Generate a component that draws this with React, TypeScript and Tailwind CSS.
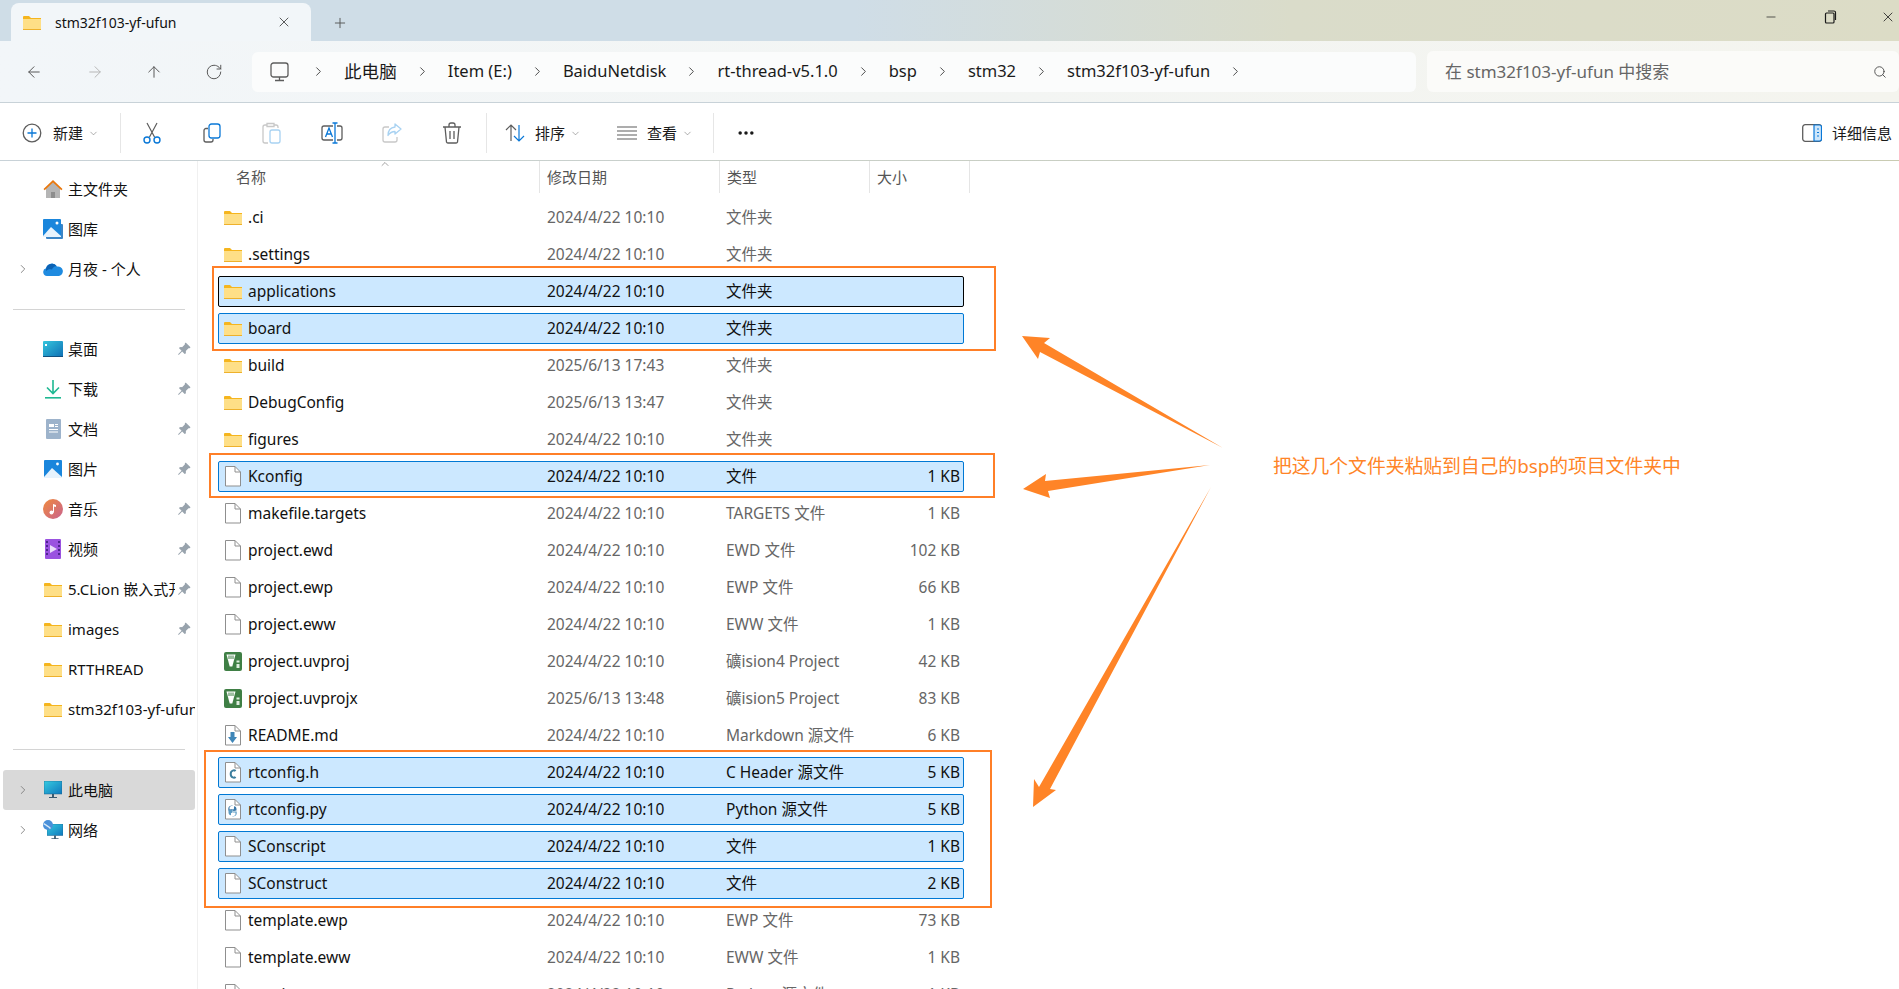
import React from "react";
import {
  ArrowLeft,
  ArrowRight,
  ArrowUp,
  ChevronDown,
  ChevronRight,
  ChevronUp,
  Minus,
  MoreHorizontal,
  Plus,
  RotateCw,
  Search,
  X,
} from "lucide-react";
import { BsPinAngleFill } from "react-icons/bs";

const FolderIcon = ({ w = 18, h = 15 }: { w?: number; h?: number }) => (
  <svg width={w} height={h} viewBox="0 0 18 15" className="shrink-0">
    <path d="M0 2a1 1 0 0 1 1-1h5l2 2h10v2H0z" fill="#f5b51e" />
    <path d="M0 4h18v10a1 1 0 0 1-1 1H1a1 1 0 0 1-1-1z" fill="#fedf87" />
    <path d="M0 14h18v1H0z" fill="#eeb12c" />
  </svg>
);

const FileIcon = ({ children }: { children?: React.ReactNode }) => (
  <svg width="17" height="21" viewBox="0 0 17 21" className="shrink-0">
    <path
      d="M1.5.5h9.5l5.500 5.500v14h-15z"
      fill="#fff"
      stroke="#8f8f8f"
      strokeLinejoin="round"
    />
    <path d="M11 .5v5.500h5.500" fill="none" stroke="#8f8f8f" />
    {children}
  </svg>
);

const CHeaderIcon = () => (
  <FileIcon>
    <path
      d="M11.500 9.200c-1-1.400-4.800-1.200-4.800 2.800s3.800 4.200 4.800 2.800"
      fill="none"
      stroke="#3c7e9e"
      strokeWidth="2"
    />
  </FileIcon>
);

const PythonIcon = () => (
  <FileIcon>
    <path d="M8.500 7c-2 0-3 .6-3 2v1.500h3v1H4.300V9.500C4.300 7.500 6 6.500 8.500 6.500z" fill="#3a78a8" />
    <path d="M5 10.500h3.500c1 0 1.500-.5 1.500-1.500V7.300c1.500.2 2.500 1 2.500 3v1.200H9v.5h3.500" fill="#3a78a8" />
    <path d="M8.500 17c2 0 3-.6 3-2v-1.500h-3v-1h4.200v2c0 2-1.700 3-4.200 3z" fill="#5b9bc4" />
    <path d="M4.500 11h4v1.500c0 .8-.6 1.500-1.500 1.500v2.200c-1.500-.2-2.500-1-2.500-3z" fill="#5b9bc4" />
  </FileIcon>
);

const MarkdownIcon = () => (
  <FileIcon>
    <path d="M6.500 7h4v5h2.500l-4.500 6-4.500-6h2.500z" fill="#3f86b8" />
  </FileIcon>
);

const KeilIcon = () => (
  <svg width="18" height="19" viewBox="0 0 18 19" className="shrink-0">
    <rect x="0" y="0" width="18" height="19" rx="2" fill="#3f7f45" />
    <path d="M2.500 2.500h9l-3.200 12h-2.600z" fill="#fff" />
    <path d="M5 3.500v3.500M7 3.500v3.500M9 3.500v3.500" stroke="#3f7f45" strokeWidth="1" />
    <path d="M12.500 8.500h3v2h-3zM12.500 12h3v4h-3z" fill="#dfeee0" />
  </svg>
);

const HomeIcon = () => (
  <svg width="20" height="20" viewBox="0 0 20 20">
    <path d="M3 9.500 10 3l7 6.500V19H3z" fill="#b5b5b5" />
    <path d="M8 19v-6h4v6z" fill="#8d8d8d" />
    <path d="M.5 10 10 1l9.500 9-1.200 1.300L10 3.500 1.700 11.300z" fill="#e8770d" />
  </svg>
);

const GalleryIcon = () => (
  <svg width="20" height="20" viewBox="0 0 20 20">
    <rect x="3" y="5" width="17" height="15" rx="1" fill="#3b85c6" />
    <rect x="0" y="0" width="18" height="18" rx="1" fill="#1a86dc" />
    <path d="M0 17 8 8l10 9v1H0z" fill="#e7f3fd" />
    <circle cx="14" cy="4" r="1.500" fill="#fff" />
  </svg>
);

const CloudIcon = () => (
  <svg width="20" height="14" viewBox="0 0 20 14">
    <path d="M4 14a4 4 0 0 1-1-7.800A6 6 0 0 1 14 4.500a4.600 4.600 0 0 1 2 9.500z" fill="#1f8be0" />
    <path d="M3 7a6 6 0 0 1 10.500-3c-3 .5-4 2.500-4.500 3.500C7 7 5 7 3 9z" fill="#0c62b4" />
  </svg>
);

const DesktopIcon = () => (
  <svg width="20" height="16" viewBox="0 0 20 16">
    <defs>
      <linearGradient id="dsk" x1="0" y1="0" x2="1" y2="1">
        <stop offset="0" stopColor="#35c6dd" />
        <stop offset="1" stopColor="#0f6fb5" />
      </linearGradient>
    </defs>
    <rect width="20" height="16" rx="1" fill="url(#dsk)" />
    <rect x="2" y="3" width="2" height="2" fill="#fff" />
    <rect y="15" width="20" height="1" fill="#12507f" />
  </svg>
);

const DownloadIcon = () => (
  <svg width="16" height="20" viewBox="0 0 16 20">
    <path d="M8 1v13M2 8.500 8 14.500l6-6" fill="none" stroke="#1fb892" strokeWidth="1.600" />
    <rect y="18" width="16" height="1.600" fill="#1fb892" />
  </svg>
);

const DocIcon = () => (
  <svg width="15" height="20" viewBox="0 0 15 20">
    <rect width="15" height="20" rx="1" fill="#9db3cb" />
    <path d="M3 5h5v3H3zM9 5h3v1H9zM9 7h3v1H9zM3 10h9v1H3zM3 12.500h9v1H3z" fill="#fff" />
  </svg>
);

const PictureIcon = () => (
  <svg width="18" height="18" viewBox="0 0 18 18">
    <rect width="18" height="18" rx="1" fill="#1a86dc" />
    <path d="M0 17 8 8l10 9v1H0z" fill="#e7f3fd" />
    <circle cx="13.500" cy="4" r="1.400" fill="#fff" />
  </svg>
);

const MusicIcon = () => (
  <svg width="20" height="20" viewBox="0 0 20 20">
    <defs>
      <linearGradient id="msc" x1="0" y1="0" x2="1" y2="1">
        <stop offset="0" stopColor="#f08a3c" />
        <stop offset="1" stopColor="#c9638f" />
      </linearGradient>
    </defs>
    <circle cx="10" cy="10" r="10" fill="url(#msc)" />
    <circle cx="8.500" cy="13.500" r="2" fill="#fff" />
    <path d="M10 13.500V5l3 1v2l-2-.5v6z" fill="#fff" />
  </svg>
);

const VideoIcon = () => (
  <svg width="16" height="20" viewBox="0 0 16 20">
    <rect width="16" height="20" rx="1" fill="#9a52e0" />
    <path d="M1 2h2v2H1zM1 6h2v2H1zM1 10h2v2H1zM1 14h2v2H1zM13 2h2v2h-2zM13 6h2v2h-2zM13 10h2v2h-2zM13 14h2v2h-2z" fill="#4f2590" />
    <path d="m5 6 7 4-7 4z" fill="#e9dcfa" />
  </svg>
);

const ComputerIcon = ({ w = 18 }: { w?: number }) => (
  <svg width={w} height={w} viewBox="0 0 18 18">
    <defs>
      <linearGradient id="pc" x1="0" y1="0" x2="1" y2="1">
        <stop offset="0" stopColor="#35cbe0" />
        <stop offset="1" stopColor="#0f78bd" />
      </linearGradient>
    </defs>
    <rect width="18" height="13" fill="url(#pc)" stroke="#1c5f88" strokeWidth=".5" />
    <path d="M8 13h2v3H8zM5 16h8v1H5z" fill="#3a5a70" />
  </svg>
);

const NetworkIcon = () => (
  <svg width="20" height="20" viewBox="0 0 20 20">
    <g transform="translate(4 4)">
      <ComputerIcon w={16} />
    </g>
    <circle cx="5" cy="5" r="5" fill="#4a90d9" />
    <path d="M1 3c2 1 5 3 7 5l-1 1C5 7 2.500 5.500.5 4.500z" fill="#d6e8f8" />
  </svg>
);

const NewIcon = () => (
  <svg width="20" height="20" viewBox="0 0 20 20" fill="none">
    <circle cx="10" cy="10" r="8.800" stroke="#5d5d5d" strokeWidth="1.300" />
    <path d="M10 5.500v9M5.500 10h9" stroke="#0a78d7" strokeWidth="1.300" />
  </svg>
);

const CutIcon = () => (
  <svg width="20" height="22" viewBox="0 0 20 22" fill="none">
    <path d="M5 1l7.500 14M15 1 7.500 15" stroke="#5d5d5d" strokeWidth="1.200" />
    <circle cx="5" cy="18" r="3" stroke="#0a78d7" strokeWidth="1.400" />
    <circle cx="15" cy="18" r="3" stroke="#0a78d7" strokeWidth="1.400" />
  </svg>
);

const CopyIcon = () => (
  <svg width="20" height="20" viewBox="0 0 20 20" fill="none">
    <path d="M6 5.500H4a2 2 0 0 0-2 2V17a2 2 0 0 0 2 2h5a2 2 0 0 0 2-2v-1" stroke="#5d5d5d" strokeWidth="1.300" />
    <rect x="7" y="1" width="11" height="14" rx="2.500" stroke="#0a78d7" strokeWidth="1.300" />
  </svg>
);

const PasteIcon = () => (
  <svg width="20" height="22" viewBox="0 0 20 22" fill="none">
    <path d="M5 3H3a2 2 0 0 0-2 2v14a2 2 0 0 0 2 2h3" stroke="#c8c8c8" strokeWidth="1.300" />
    <path d="M5 1.500h7v3H5zM12 3h2a2 2 0 0 1 2 2v1" stroke="#c8c8c8" strokeWidth="1.300" />
    <rect x="8" y="8" width="10" height="13" rx="2" stroke="#a8d2f2" strokeWidth="1.300" />
  </svg>
);

const RenameIcon = () => (
  <svg width="22" height="22" viewBox="0 0 22 22" fill="none">
    <path d="M12 4H3a2 2 0 0 0-2 2v10a2 2 0 0 0 2 2h9M16 4h3a2 2 0 0 1 2 2v10a2 2 0 0 1-2 2h-3" stroke="#5d5d5d" strokeWidth="1.300" />
    <path d="M14 1v20M11.500 1h5M11.500 21h5" stroke="#0a78d7" strokeWidth="1.300" />
    <path d="m4.500 15 3.500-9 3.500 9M5.700 12h4.600" stroke="#0a78d7" strokeWidth="1.300" />
  </svg>
);

const ShareIcon = () => (
  <svg width="20" height="20" viewBox="0 0 20 20" fill="none">
    <path d="M7 4H3a2 2 0 0 0-2 2v11a2 2 0 0 0 2 2h10a2 2 0 0 0 2-2v-3" stroke="#c8c8c8" strokeWidth="1.300" />
    <path d="M13 1l6 5-6 5V8.500c-3 0-5 1-7 4 0-5 3-8 7-8.500z" stroke="#a8d2f2" strokeWidth="1.300" strokeLinejoin="round" />
  </svg>
);

const TrashIcon = () => (
  <svg width="20" height="22" viewBox="0 0 20 22" fill="none">
    <path d="M1 5h18M7 5V3a2 2 0 0 1 2-2h2a2 2 0 0 1 2 2v2" stroke="#5d5d5d" strokeWidth="1.300" />
    <path d="M3 5l1.500 15a1.500 1.500 0 0 0 1.500 1h8a1.500 1.500 0 0 0 1.500-1L17 5" stroke="#5d5d5d" strokeWidth="1.300" />
    <path d="M8 9v8M12 9v8" stroke="#5d5d5d" strokeWidth="1.300" />
  </svg>
);

const SortIcon = () => (
  <svg width="20" height="20" viewBox="0 0 20 20" fill="none">
    <path d="M6 18V2M1 7l5-5 5 5" stroke="#5d5d5d" strokeWidth="1.200" />
    <path d="M14 2v16M9 13l5 5 5-5" stroke="#0a78d7" strokeWidth="1.200" />
  </svg>
);

const ViewIcon = () => (
  <svg width="20" height="16" viewBox="0 0 20 16" fill="none">
    <path d="M0 2h20M0 6h20M0 10h20M0 14h20" stroke="#5d5d5d" strokeWidth="1.200" />
  </svg>
);

const DetailsIcon = () => (
  <svg width="20" height="18" viewBox="0 0 20 18" fill="none">
    <rect x=".7" y=".7" width="18.600" height="16.600" rx="2.500" stroke="#5d5d5d" strokeWidth="1.300" />
    <path d="M12 1h5.500a2 2 0 0 1 2 2v12a2 2 0 0 1-2 2H12z" fill="#cde6fb" stroke="#0a78d7" strokeWidth="1.200" />
    <path d="M15 5h2M15 8.500h2M15 12h2" stroke="#0a78d7" strokeWidth="1.200" />
  </svg>
);

const MonitorIcon = () => (
  <svg width="19" height="20" viewBox="0 0 19 20" fill="none" className="mr-[4px] shrink-0">
    <rect x="1" y="1" width="17" height="14" rx="2.500" stroke="#5d5d5d" strokeWidth="1.300" />
    <path d="M9.500 15v3M5 18.500h9" stroke="#5d5d5d" strokeWidth="1.300" />
  </svg>
);

const RestoreIcon = () => (
  <svg width="14" height="14" viewBox="0 0 14 14" fill="none" stroke="#1a1a1a" strokeWidth="1.200">
    <rect x="2.500" y="3" width="8.500" height="10" rx="1" />
    <path d="M5 1h6a1.500 1.500 0 0 1 1.500 1.500V10" />
  </svg>
);

const crumbs = [
  "此电脑",
  "Item (E:)",
  "BaiduNetdisk",
  "rt-thread-v5.1.0",
  "bsp",
  "stm32",
  "stm32f103-yf-ufun",
];

type SideItem = {
  label: string;
  icon: React.ReactNode;
  expand?: boolean;
  pin?: boolean;
  clip?: string;
  active?: boolean;
};

const sideTop: SideItem[] = [
  { label: "主文件夹", icon: <HomeIcon /> },
  { label: "图库", icon: <GalleryIcon /> },
  { label: "月夜 - 个人", icon: <CloudIcon />, expand: true },
];

const sideMid: SideItem[] = [
  { label: "桌面", icon: <DesktopIcon />, pin: true },
  { label: "下载", icon: <DownloadIcon />, pin: true },
  { label: "文档", icon: <DocIcon />, pin: true },
  { label: "图片", icon: <PictureIcon />, pin: true },
  { label: "音乐", icon: <MusicIcon />, pin: true },
  { label: "视频", icon: <VideoIcon />, pin: true },
  { label: "5.CLion 嵌入式开发", icon: <FolderIcon />, pin: true, clip: "w-[107px]" },
  { label: "images", icon: <FolderIcon />, pin: true },
  { label: "RTTHREAD", icon: <FolderIcon /> },
  { label: "stm32f103-yf-ufun", icon: <FolderIcon />, clip: "w-[127px]" },
];

const sideBottom: SideItem[] = [
  { label: "此电脑", icon: <ComputerIcon />, expand: true, active: true },
  { label: "网络", icon: <NetworkIcon />, expand: true },
];

type FileRow = {
  name: string;
  date: string;
  type: string;
  size?: string;
  icon: React.ReactNode;
  selected?: boolean;
  focused?: boolean;
};

const D1 = "2024/4/22 10:10";
const folder = <FolderIcon />;
const file = <FileIcon />;
const keil = <KeilIcon />;

const files: FileRow[] = [
  { name: ".ci", date: D1, type: "文件夹", icon: folder },
  { name: ".settings", date: D1, type: "文件夹", icon: folder },
  { name: "applications", date: D1, type: "文件夹", icon: folder, selected: true, focused: true },
  { name: "board", date: D1, type: "文件夹", icon: folder, selected: true },
  { name: "build", date: "2025/6/13 17:43", type: "文件夹", icon: folder },
  { name: "DebugConfig", date: "2025/6/13 13:47", type: "文件夹", icon: folder },
  { name: "figures", date: D1, type: "文件夹", icon: folder },
  { name: "Kconfig", date: D1, type: "文件", size: "1 KB", icon: file, selected: true },
  { name: "makefile.targets", date: D1, type: "TARGETS 文件", size: "1 KB", icon: file },
  { name: "project.ewd", date: D1, type: "EWD 文件", size: "102 KB", icon: file },
  { name: "project.ewp", date: D1, type: "EWP 文件", size: "66 KB", icon: file },
  { name: "project.eww", date: D1, type: "EWW 文件", size: "1 KB", icon: file },
  { name: "project.uvproj", date: D1, type: "礦ision4 Project", size: "42 KB", icon: keil },
  { name: "project.uvprojx", date: "2025/6/13 13:48", type: "礦ision5 Project", size: "83 KB", icon: keil },
  { name: "README.md", date: D1, type: "Markdown 源文件", size: "6 KB", icon: <MarkdownIcon /> },
  { name: "rtconfig.h", date: D1, type: "C Header 源文件", size: "5 KB", icon: <CHeaderIcon />, selected: true },
  { name: "rtconfig.py", date: D1, type: "Python 源文件", size: "5 KB", icon: <PythonIcon />, selected: true },
  { name: "SConscript", date: D1, type: "文件", size: "1 KB", icon: file, selected: true },
  { name: "SConstruct", date: D1, type: "文件", size: "2 KB", icon: file, selected: true },
  { name: "template.ewp", date: D1, type: "EWP 文件", size: "73 KB", icon: file },
  { name: "template.eww", date: D1, type: "EWW 文件", size: "1 KB", icon: file },
  { name: "wscript", date: D1, type: "Python 源文件", size: "1 KB", icon: file },
];

const SideRow = ({ item }: { item: SideItem }) => (
  <div
    className={`mx-[3px] flex h-10 w-[192px] items-center rounded-[3px] ${
      item.active ? "bg-[#d9d9d9]" : ""
    }`}
  >
    <div className="flex w-[27px] justify-end">
      {item.expand && <ChevronRight size={14} strokeWidth={1.5} color="#7a7a7a" />}
    </div>
    <div className="ml-[13px] flex w-5 shrink-0 justify-center">{item.icon}</div>
    <span
      className={`ml-[5px] overflow-hidden text-[15px] whitespace-nowrap text-[#111] ${item.clip ?? ""}`}
    >
      {item.label}
    </span>
    {item.pin && (
      <BsPinAngleFill size={14} color="#98a3ad" className="mr-[4px] ml-auto shrink-0" />
    )}
  </div>
);

const Row = ({ row }: { row: FileRow }) => {
  const box = row.focused
    ? "border-black bg-[#cce8ff]"
    : row.selected
      ? "border-[#0078d4] bg-[#cce8ff]"
      : "border-transparent";
  const sub = row.selected ? "text-[#111]" : "text-[#666]";
  return (
    <div
      className={`ml-[20px] flex h-[31px] w-[746px] shrink-0 items-center rounded-[2px] border text-[15.5px] whitespace-nowrap ${box}`}
    >
      <div className="ml-[5px] flex w-[24px] items-center">{row.icon}</div>
      <span className="w-[299px] text-[#111]">{row.name}</span>
      <span className={`w-[179px] ${sub}`}>{row.date}</span>
      <span className={`w-[140px] ${sub}`}>{row.type}</span>
      <span className={`w-[94px] text-right ${sub}`}>{row.size}</span>
    </div>
  );
};

const IconBtn = ({ children }: { children: React.ReactNode }) => (
  <div className="flex w-[60px] items-center justify-center">{children}</div>
);

const Sep = () => <div className="h-10 w-px bg-[#e6e6e6]" />;

export default function App() {
  return (
    <div
      className="relative h-[989px] w-[1899px] overflow-hidden bg-white"
      style={{ fontFamily: '"Noto Sans", "Noto Sans CJK SC", sans-serif' }}
    >
      {/* title bar */}
      <div className="flex h-[41px] items-end bg-[linear-gradient(90deg,#cfdde7_0%,#cfdde7_45%,#dadcca_68%,#dcdcc6_100%)]">
        <div className="ml-[11px] flex h-[38px] w-[300px] items-center rounded-t-lg bg-[#f2f6f9] pl-[12px]">
          <FolderIcon />
          <span className="ml-[14px] text-[14px] text-[#111]">stm32f103-yf-ufun</span>
          <X size={16} strokeWidth={1.2} color="#333" className="ml-auto mr-[19px]" />
        </div>
        <Plus size={16} strokeWidth={1.4} color="#555" className="mb-[10px] ml-[21px]" />
        <div className="mb-[16px] ml-auto flex items-center gap-[45px] pr-[3px]">
          <Minus size={14} strokeWidth={1.2} color="#1a1a1a" />
          <RestoreIcon />
          <X size={16} strokeWidth={1.2} color="#1a1a1a" className="-ml-[2px]" />
        </div>
      </div>

      {/* address bar */}
      <div className="flex h-[62px] items-center border-b border-[#c8d2d8] bg-linear-to-r from-[#f2f6f9] to-[#f4f4ee]">
        <div className="flex w-[252px] shrink-0 items-center pl-[25px]">
          <ArrowLeft size={18} strokeWidth={1.3} color="#555" />
          <ArrowRight size={18} strokeWidth={1.3} color="#b5b5b5" className="ml-[43px]" />
          <ArrowUp size={18} strokeWidth={1.3} color="#555" className="ml-[41px]" />
          <RotateCw size={18} strokeWidth={1.3} color="#555" className="ml-[42px]" />
        </div>
        <div className="flex h-10 w-[1164px] items-center rounded-md bg-[#fbfcfc] pl-[18px] text-[16.5px] whitespace-nowrap text-[#1a1a1a]">
          <MonitorIcon />
          {crumbs.map((c) => (
            <React.Fragment key={c}>
              <div className="flex w-[51px] justify-center">
                <ChevronRight size={15} strokeWidth={1.4} color="#333" />
              </div>
              <span className={c === "此电脑" ? "text-[17.6px]" : ""}>{c}</span>
            </React.Fragment>
          ))}
          <div className="flex w-[51px] justify-center">
            <ChevronRight size={15} strokeWidth={1.4} color="#333" />
          </div>
        </div>
        <div className="ml-[11px] flex h-[41px] flex-1 items-center rounded-md bg-[#fbfbf9] pl-[18px] text-[17px] text-[#666]">
          <span>在 stm32f103-yf-ufun 中搜索</span>
          <Search size={14} strokeWidth={1.5} color="#444" className="ml-auto mr-[12px]" />
        </div>
      </div>

      {/* toolbar */}
      <div className="flex h-[57px] items-center pt-[3px] whitespace-nowrap text-[15px] text-[#1a1a1a]">
        <div className="flex w-[120px] items-center pl-[22px]">
          <NewIcon />
          <span className="ml-[11px]">新建</span>
          <ChevronDown size={11} strokeWidth={1.3} color="#777" className="ml-[5px]" />
        </div>
        <Sep />
        <div className="ml-px flex">
          <IconBtn><CutIcon /></IconBtn>
          <IconBtn><CopyIcon /></IconBtn>
          <IconBtn><PasteIcon /></IconBtn>
          <IconBtn><RenameIcon /></IconBtn>
          <IconBtn><ShareIcon /></IconBtn>
          <IconBtn><TrashIcon /></IconBtn>
        </div>
        <div className="ml-1"><Sep /></div>
        <div className="ml-[18px] flex items-center">
          <SortIcon />
          <span className="ml-[10px]">排序</span>
          <ChevronDown size={11} strokeWidth={1.3} color="#777" className="ml-[5px]" />
        </div>
        <div className="ml-[36px] flex items-center">
          <ViewIcon />
          <span className="ml-[10px]">查看</span>
          <ChevronDown size={11} strokeWidth={1.3} color="#777" className="ml-[5px]" />
        </div>
        <div className="ml-[20px]"><Sep /></div>
        <MoreHorizontal size={20} strokeWidth={2.2} color="#1a1a1a" className="ml-[22px]" />
        <div className="ml-auto flex items-center pr-[7px]">
          <DetailsIcon />
          <span className="ml-[10px]">详细信息</span>
        </div>
      </div>
      <div className="h-px bg-linear-to-r from-[#c8d2d8] to-[#c9cbb2]" />

      <div className="flex h-[828px]">
        {/* sidebar */}
        <div className="w-[198px] shrink-0 border-r border-[#f0f0f0] pt-2">
          {sideTop.map((i) => <SideRow key={i.label} item={i} />)}
          <div className="mx-[13px] mt-[20px] mb-[19px] h-px w-[172px] bg-[#d4d4d4]" />
          {sideMid.map((i) => <SideRow key={i.label} item={i} />)}
          <div className="mx-[13px] my-[20px] h-px w-[172px] bg-[#d4d4d4]" />
          {sideBottom.map((i) => <SideRow key={i.label} item={i} />)}
        </div>

        {/* file list */}
        <div className="relative flex-1 overflow-hidden">
          <div className="flex h-8 items-center text-[15px] text-[#555]">
            <div className="flex h-full w-[342px] items-center border-r border-[#e5e5e5] pl-[38px]">名称</div>
            <div className="flex h-full w-[180px] items-center border-r border-[#e5e5e5] pl-[7px]">修改日期</div>
            <div className="flex h-full w-[150px] items-center border-r border-[#e5e5e5] pl-[7px]">类型</div>
            <div className="flex h-full w-[100px] items-center border-r border-[#e5e5e5] pl-[7px]">大小</div>
          </div>
          <ChevronUp size={12} strokeWidth={1.2} color="#666" className="absolute top-[-3px] left-[181px]" />
          <div className="mt-[9px] flex flex-col gap-[6px]">
            {files.map((r) => <Row key={r.name} row={r} />)}
          </div>
        </div>
      </div>

      {/* annotations drawn over the screenshot */}
      <div className="absolute top-[266px] left-[212px] h-[85px] w-[784px] border-2 border-[#ff7f27]" />
      <div className="absolute top-[453px] left-[209px] h-[45px] w-[786px] border-2 border-[#ff7f27]" />
      <div className="absolute top-[750px] left-[204px] h-[158px] w-[788px] border-2 border-[#ff7f27]" />
      <svg className="absolute inset-0 h-full w-full" viewBox="0 0 1899 989">
        <polygon fill="#ff8427" points="1223,448 1044,343 1050,338 1022,336 1038,359 1040,352" />
        <polygon fill="#ff8427" points="1210,465 1045,481 1046,474 1023,489 1050,498 1048,491" />
        <polygon fill="#ff8427" points="1211,487 1039,787 1034,779 1033,807 1056,790 1050,789" />
      </svg>
      <span className="absolute top-[452px] left-[1273px] text-[18.8px] leading-[28px] whitespace-nowrap text-[#ff8427]">
        把这几个文件夹粘贴到自己的bsp的项目文件夹中
      </span>
    </div>
  );
}
